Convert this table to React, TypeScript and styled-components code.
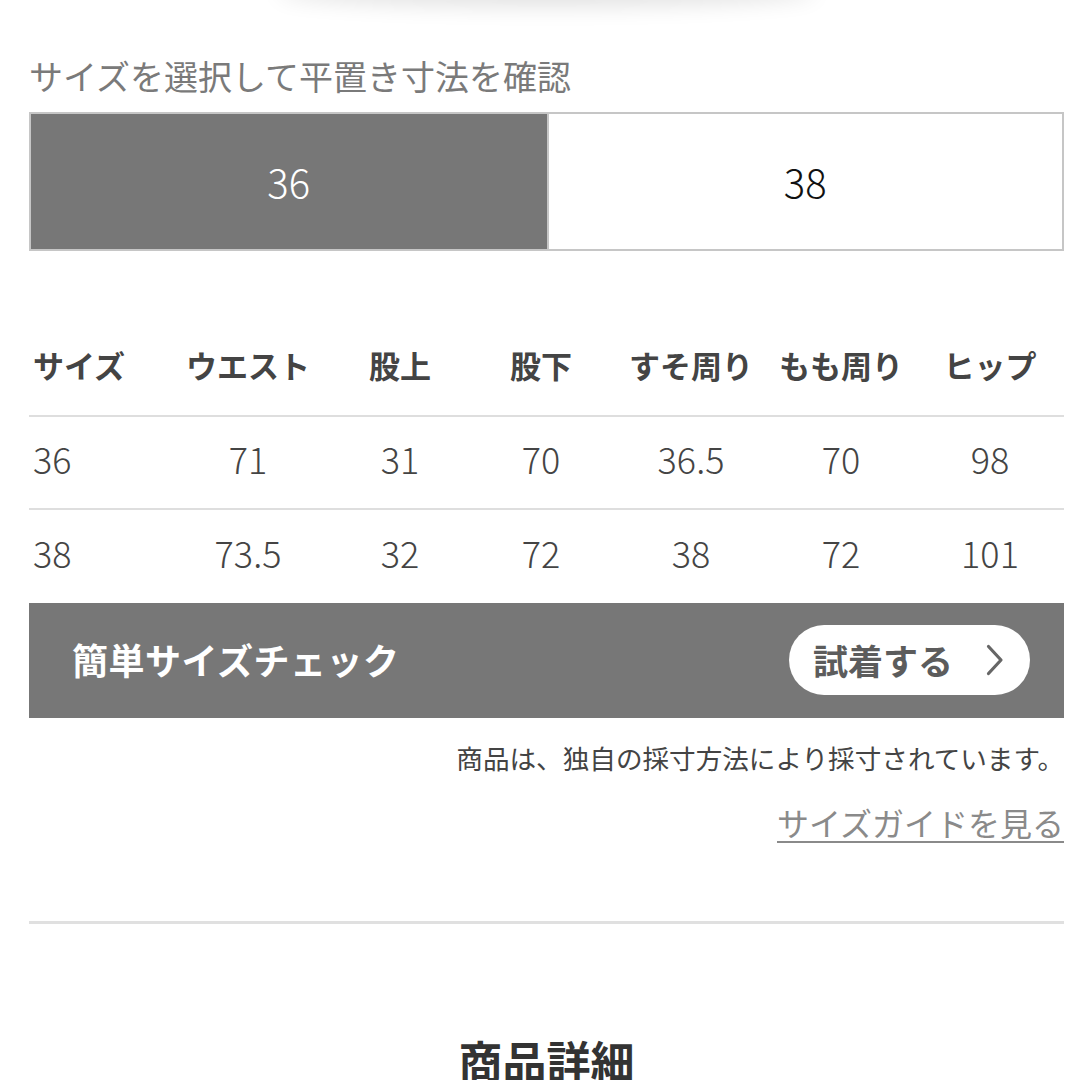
import React from "react";
import styled, { createGlobalStyle } from "styled-components";

const GlobalStyle = createGlobalStyle`
  html, body {
    margin: 0;
    padding: 0;
    background: #ffffff;
  }
  body {
    font-family: "Noto Sans CJK JP", "Noto Sans", sans-serif;
    overflow: hidden;
  }
  * { box-sizing: border-box; }
`;

const Page = styled.div`
  width: 1080px;
  padding: 0 16px 0 29px;
  display: flex;
  flex-direction: column;
  & > * { flex-shrink: 0; }
`;

const ShadowCap = styled.div`
  align-self: center;
  width: 540px;
  height: 30px;
  margin-top: -30px;
  border-radius: 50%;
  background: #fff;
  box-shadow: 0 6px 22px rgba(0, 0, 0, 0.12);
`;

const Heading = styled.h2`
  margin: 52px 0 0;
  font-size: 34px;
  line-height: 48px;
  font-weight: 400;
  color: #7a7a7a;
`;

const Tabs = styled.div`
  margin-top: 12px;
  height: 139px;
  display: grid;
  grid-template-columns: 1fr 1fr;
  border: 2px solid #c6c6c6;
`;

const Tab = styled.button<{ $active?: boolean }>`
  appearance: none;
  border: none;
  border-left: ${(p) => (p.$active ? "none" : "2px solid #c6c6c6")};
  margin: 0;
  padding: 0 0 2px;
  background: ${(p) => (p.$active ? "#777777" : "#ffffff")};
  color: ${(p) => (p.$active ? "#ffffff" : "#111111")};
  font-family: "Noto Sans CJK JP", "Noto Sans", sans-serif;
  font-size: 40px;
  font-weight: 300;
  display: flex;
  align-items: center;
  justify-content: center;
`;

const Table = styled.div`
  margin-top: 73px;
  display: flex;
  flex-direction: column;
`;

const Row = styled.div<{ $last?: boolean }>`
  height: 93px;
  padding-bottom: 9px;
  display: grid;
  grid-template-columns: 133px 172px 132px 150px 150px 150px 148px;
  align-items: center;
  border-bottom: ${(p) => (p.$last ? "none" : "2px solid #dedede")};
`;

const Cell = styled.div<{ $head?: boolean; $first?: boolean }>`
  text-align: ${(p) => (p.$first ? "left" : "center")};
  padding-left: ${(p) => (p.$first ? "4px" : "0")};
  font-size: ${(p) => (p.$head ? "31px" : "36px")};
  font-weight: ${(p) => (p.$head ? 700 : 300)};
  color: #444444;
  white-space: nowrap;
  line-height: 1.3;
`;

const CheckBar = styled.div`
  height: 115px;
  background: #777777;
  display: flex;
  align-items: center;
  justify-content: space-between;
  padding: 0 34px 2px 43px;
`;

const CheckTitle = styled.span`
  color: #ffffff;
  font-size: 36px;
  font-weight: 700;
  line-height: 1.3;
  letter-spacing: 0.5px;
`;

const TryButton = styled.button`
  appearance: none;
  border: none;
  width: 241px;
  height: 70px;
  border-radius: 35px;
  background: #ffffff;
  display: flex;
  align-items: center;
  justify-content: space-between;
  padding: 0 26px 0 24px;
  font-family: "Noto Sans CJK JP", "Noto Sans", sans-serif;
  font-size: 35px;
  font-weight: 700;
  color: #5c5c5c;
  cursor: pointer;
`;

const Note = styled.p`
  margin: 20px 0 0;
  text-align: right;
  font-size: 26.6px;
  line-height: 40px;
  font-weight: 400;
  color: #444444;
  white-space: nowrap;
`;

const LinkRow = styled.div`
  margin-top: 25px;
  display: flex;
  justify-content: flex-end;
`;

const GuideLink = styled.a`
  display: inline-block;
  font-size: 32px;
  line-height: 38px;
  color: #8a8a8a;
  text-decoration: none;
  border-bottom: 2px solid #8a8a8a;
`;

const Divider = styled.hr`
  margin: 78px 0 0;
  border: none;
  height: 3px;
  background: #e0e0e0;
`;

const SectionTitle = styled.h2`
  margin: 106px 0 0;
  text-align: center;
  font-size: 44px;
  line-height: 1.4;
  font-weight: 700;
  color: #333333;
`;

const headers = ["サイズ", "ウエスト", "股上", "股下", "すそ周り", "もも周り", "ヒップ"];
const rows = [
  ["36", "71", "31", "70", "36.5", "70", "98"],
  ["38", "73.5", "32", "72", "38", "72", "101"],
];

const Chevron = () => (
  <svg width="18" height="32" viewBox="0 0 18 32" fill="none">
    <path d="M2.5 2.5 L15 16 L2.5 29.5" stroke="#666" strokeWidth="3.2" strokeLinecap="round" strokeLinejoin="round" />
  </svg>
);

export default function App() {
  return (
    <>
      <GlobalStyle />
      <Page>
        <ShadowCap />
        <Heading>サイズを選択して平置き寸法を確認</Heading>
        <Tabs>
          <Tab $active>36</Tab>
          <Tab>38</Tab>
        </Tabs>
        <Table>
          <Row>
            {headers.map((h, i) => (
              <Cell key={h} $head $first={i === 0}>
                {h}
              </Cell>
            ))}
          </Row>
          {rows.map((r, ri) => (
            <Row key={ri} $last={ri === rows.length - 1}>
              {r.map((v, i) => (
                <Cell key={i} $first={i === 0}>
                  {v}
                </Cell>
              ))}
            </Row>
          ))}
        </Table>
        <CheckBar>
          <CheckTitle>簡単サイズチェック</CheckTitle>
          <TryButton>
            試着する
            <Chevron />
          </TryButton>
        </CheckBar>
        <Note>商品は、独自の採寸方法により採寸されています。</Note>
        <LinkRow>
          <GuideLink href="#">サイズガイドを見る</GuideLink>
        </LinkRow>
        <Divider />
        <SectionTitle>商品詳細</SectionTitle>
      </Page>
    </>
  );
}
